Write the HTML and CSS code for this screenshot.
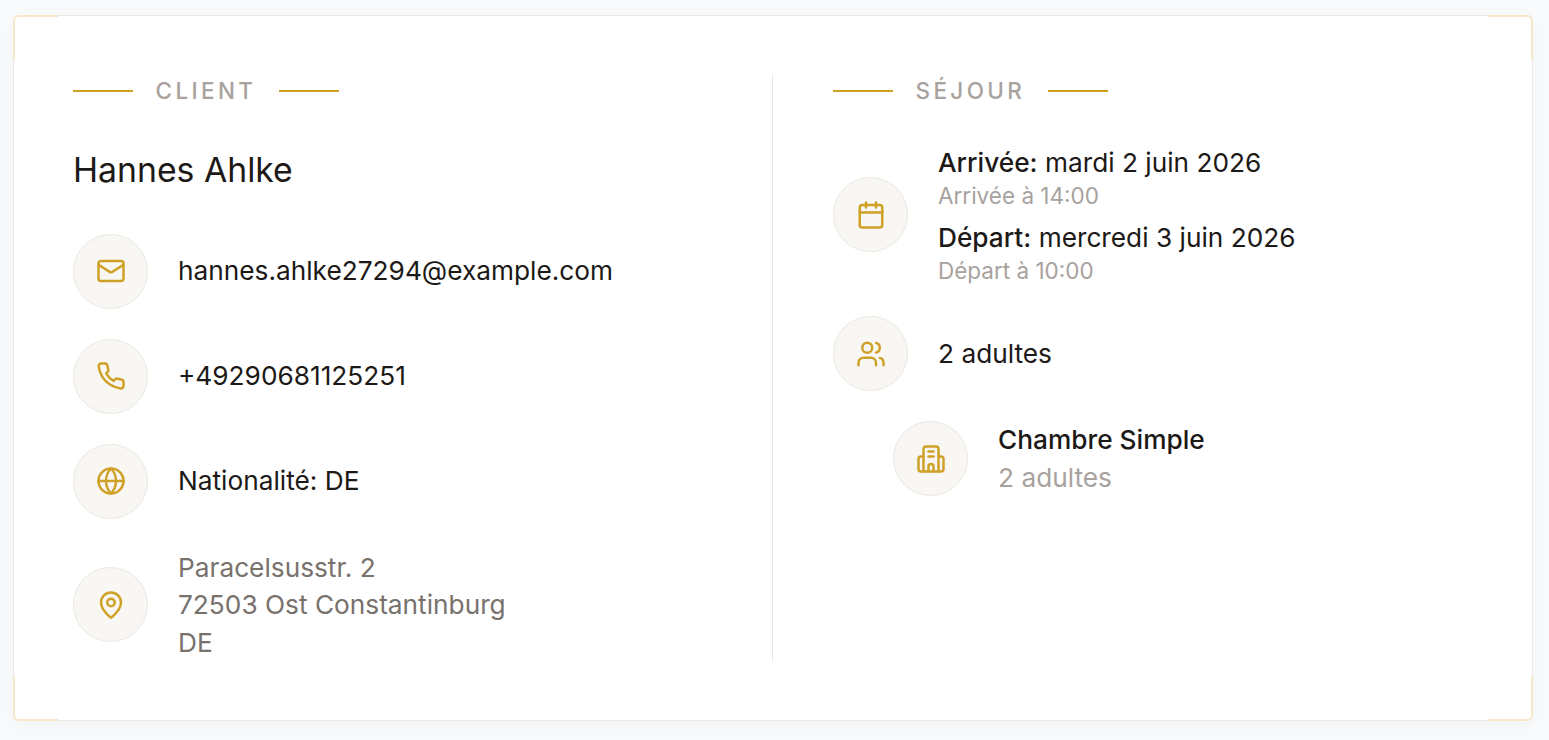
FILE: index.html
```html
<!DOCTYPE html>
<html lang="fr">
<head>
  <meta charset="UTF-8" />
  <title>Réservation</title>
  <meta name="viewport" content="width=device-width, initial-scale=1.0"/>
  <link rel="stylesheet" href="styles.css">
</head>
<body>

  <div class="card">
    <span class="corner corner-tl"></span>
    <span class="corner corner-tr"></span>
    <span class="corner corner-bl"></span>
    <span class="corner corner-br"></span>

    <!-- Client -->
    <section class="col col-client">
      <div class="section-title"><span class="rule"></span><h2>CLIENT</h2><span class="rule"></span></div>
      <div class="guest-name">Hannes Ahlke</div>

      <div class="row">
        <div class="icon-circle">
          <svg class="icon" viewBox="0 0 24 24"><rect x="2" y="4" width="20" height="16" rx="2"/><path d="m22 7-8.97 5.7a1.94 1.94 0 0 1-2.06 0L2 7"/></svg>
        </div>
        <div class="row-text">hannes.ahlke27294@example.com</div>
      </div>

      <div class="row">
        <div class="icon-circle">
          <svg class="icon" viewBox="0 0 24 24"><path d="M22 16.92v3a2 2 0 0 1-2.18 2 19.79 19.79 0 0 1-8.63-3.07 19.5 19.5 0 0 1-6-6 19.79 19.79 0 0 1-3.07-8.67A2 2 0 0 1 4.11 2h3a2 2 0 0 1 2 1.72 12.84 12.84 0 0 0 .7 2.81 2 2 0 0 1-.45 2.11L8.09 9.91a16 16 0 0 0 6 6l1.27-1.27a2 2 0 0 1 2.11-.45 12.84 12.84 0 0 0 2.81.7A2 2 0 0 1 22 16.92z"/></svg>
        </div>
        <div class="row-text">+49290681125251</div>
      </div>

      <div class="row">
        <div class="icon-circle">
          <svg class="icon" viewBox="0 0 24 24"><circle cx="12" cy="12" r="10"/><path d="M12 2a14.5 14.5 0 0 0 0 20 14.5 14.5 0 0 0 0-20"/><path d="M2 12h20"/></svg>
        </div>
        <div class="row-text">Nationalité: DE</div>
      </div>

      <div class="row">
        <div class="icon-circle">
          <svg class="icon" viewBox="0 0 24 24"><path d="M20 10c0 4.993-5.539 10.193-7.399 11.799a1 1 0 0 1-1.202 0C9.539 20.193 4 14.993 4 10a8 8 0 0 1 16 0"/><circle cx="12" cy="10" r="3"/></svg>
        </div>
        <div class="row-text address">Paracelsusstr. 2<br>72503 Ost Constantinburg<br>DE</div>
      </div>
    </section>

    <!-- Sejour -->
    <section class="col col-stay">
      <div class="section-title"><span class="rule"></span><h2>SÉJOUR</h2><span class="rule"></span></div>

      <div class="row">
        <div class="icon-circle">
          <svg class="icon" viewBox="0 0 24 24"><path d="M8 2v4"/><path d="M16 2v4"/><rect x="3" y="4" width="18" height="18" rx="2"/><path d="M3 10h18"/></svg>
        </div>
        <div class="row-text">
          <div class="date"><strong>Arrivée:</strong> mardi 2 juin 2026</div>
          <div class="date-note">Arrivée à 14:00</div>
          <div class="date date-next"><strong>Départ:</strong> mercredi 3 juin 2026</div>
          <div class="date-note">Départ à 10:00</div>
        </div>
      </div>

      <div class="row">
        <div class="icon-circle">
          <svg class="icon" viewBox="0 0 24 24"><path d="M16 21v-2a4 4 0 0 0-4-4H6a4 4 0 0 0-4 4v2"/><circle cx="9" cy="7" r="4"/><path d="M22 21v-2a4 4 0 0 0-3-3.87"/><path d="M16 3.13a4 4 0 0 1 0 7.75"/></svg>
        </div>
        <div class="row-text">2 adultes</div>
      </div>

      <div class="row room">
        <div class="icon-circle">
          <svg class="icon" viewBox="0 0 24 24"><path d="M6 22V4a2 2 0 0 1 2-2h8a2 2 0 0 1 2 2v18"/><path d="M6 10H4a2 2 0 0 0-2 2v8a2 2 0 0 0 2 2h16a2 2 0 0 0 2-2v-8a2 2 0 0 0-2-2h-2"/><path d="M10 6h4"/><path d="M10 10h4"/><path d="M10 22v-4a2 2 0 0 1 4 0v4"/></svg>
        </div>
        <div class="row-text">
          <div class="room-name">Chambre Simple</div>
          <div class="room-guests">2 adultes</div>
        </div>
      </div>
    </section>
  </div>

</body>
</html>
```

FILE: styles.css
```css
* {
  box-sizing: border-box;
}

body {
  margin: 0;
  padding: 15px 16px 19px 13px;
  font-family: Inter, sans-serif;
  background-color: #f8fafc;
  color: #1c1917;
}

/* CARD */
.card {
  position: relative;
  display: grid;
  grid-template-columns: 1fr 1fr;
  padding: 60px;
  background-color: #fff;
  border-radius: 6px;
  box-shadow: inset 0 0 0 1px #ebe7e2, 0 6px 24px rgba(28, 25, 23, 0.03);
}

.corner {
  position: absolute;
  width: 45px;
  height: 45px;
  border: 0 solid #f5e8c8;
}

.corner-tl {
  top: 0;
  left: 0;
  border-top-width: 2px;
  border-left-width: 2px;
  border-top-left-radius: 6px;
}

.corner-tr {
  top: 0;
  right: 0;
  border-top-width: 2px;
  border-right-width: 2px;
  border-top-right-radius: 6px;
}

.corner-bl {
  bottom: 0;
  left: 0;
  border-bottom-width: 2px;
  border-left-width: 2px;
  border-bottom-left-radius: 6px;
}

.corner-br {
  bottom: 0;
  right: 0;
  border-bottom-width: 2px;
  border-right-width: 2px;
  border-bottom-right-radius: 6px;
}

/* COLUMNS */
.col-client {
  padding-right: 60px;
  border-right: 1px solid #e9e5e0;
}

.col-stay {
  padding-left: 60px;
}

.section-title {
  display: flex;
  align-items: center;
  gap: 22.5px;
  height: 31.5px;
  margin-bottom: 37px;
}

.section-title h2 {
  margin: 0;
  font-size: 22.5px;
  font-weight: 500;
  letter-spacing: 3.375px;
  color: #a8a29e;
}

.rule {
  width: 60px;
  height: 2px;
  background-color: #cfa120;
}

.guest-name {
  font-size: 33.75px;
  line-height: 52.5px;
  margin-bottom: 37.5px;
}

/* ROWS */
.row {
  display: flex;
  align-items: center;
  gap: 30px;
  margin-bottom: 30px;
}

.row:last-child {
  margin-bottom: 0;
}

.icon-circle {
  flex: none;
  display: flex;
  align-items: center;
  justify-content: center;
  width: 75px;
  height: 75px;
  border-radius: 50%;
  background-color: #f9f7f4;
  border: 1px solid #ebe7e2;
}

.icon {
  width: 30px;
  height: 30px;
  fill: none;
  stroke: #cfa127;
  stroke-width: 2;
  stroke-linecap: round;
  stroke-linejoin: round;
}

.row-text {
  font-size: 26.25px;
  line-height: 37.5px;
}

.address {
  color: #78716c;
}

.date strong {
  font-weight: 500;
}

.date-next {
  margin-top: 7.5px;
}

.date-note {
  font-size: 22.5px;
  line-height: 30px;
  color: #a8a29e;
}

.room {
  padding-left: 60px;
}

.room-name {
  font-weight: 500;
}

.room-guests {
  color: #a8a29e;
}
```
